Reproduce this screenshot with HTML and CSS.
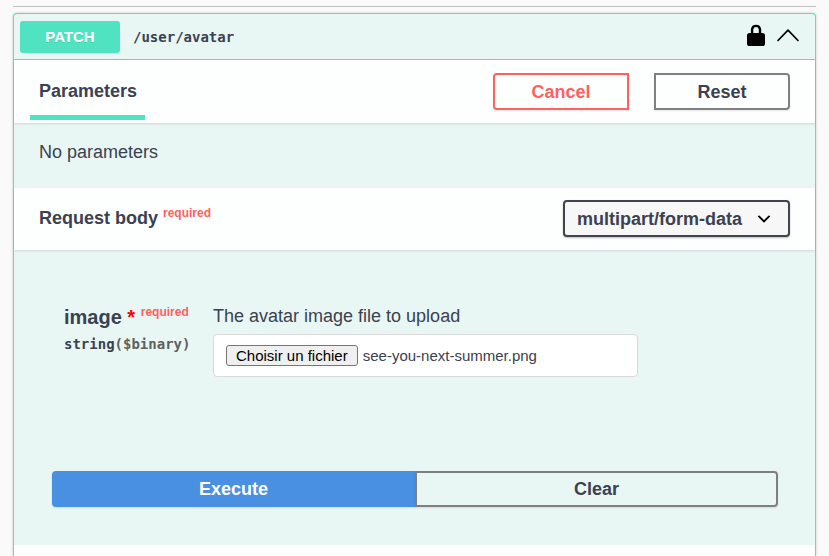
FILE: index.html
```html
<!DOCTYPE html>
<html lang="en">
<head>
<meta charset="utf-8">
<meta name="viewport" content="width=device-width, initial-scale=1">
<title>PATCH /user/avatar</title>
<link rel="stylesheet" href="styles.css">
</head>
<body>
<main class="page">
  <hr class="divider">
  <section class="operation">
    <header class="summary">
      <span class="method">PATCH</span>
      <span class="path">/user/avatar</span>
      <div class="summary-actions">
        <button class="icon-button" type="button" aria-label="Authorization">
          <svg width="20" height="24" viewBox="0 0 20 24"><path d="M6.1 11V6.2a4 4 0 0 1 7.9 0V11" fill="none" stroke="#000" stroke-width="2.4"/><rect x="1" y="10" width="18" height="13" rx="2.6"/></svg>
        </button>
        <button class="icon-button" type="button" aria-label="Collapse">
          <svg width="24" height="24" viewBox="0 0 24 24"><path d="M2 17.5 12 7.2 22 17.5" fill="none" stroke="#000" stroke-width="1.7" stroke-linecap="round" stroke-linejoin="round"/></svg>
        </button>
      </div>
    </header>

    <div class="bar bar-tabs">
      <h2 class="tab">Parameters</h2>
      <div class="bar-actions">
        <button class="btn btn-cancel" type="button">Cancel</button>
        <button class="btn btn-reset" type="button">Reset</button>
      </div>
    </div>
    <p class="empty">No parameters</p>

    <div class="bar bar-body">
      <h2 class="bar-title">Request body <span class="required">required</span></h2>
      <select class="content-type" aria-label="Content type">
        <option>multipart/form-data</option>
      </select>
    </div>

    <form class="request">
      <div class="field">
        <div class="field-info">
          <div class="field-name">image <span class="star">*</span> <span class="required">required</span></div>
          <div class="field-type">string<span class="format">($binary)</span></div>
        </div>
        <div class="field-value">
          <p class="description">The avatar image file to upload</p>
          <div class="file-box">
            <input class="file-input" type="file" id="image">
            <label class="file-button" for="image">Choisir un fichier</label>
            <span class="file-name">see-you-next-summer.png</span>
          </div>
        </div>
      </div>
      <div class="execute-group">
        <button class="btn btn-execute" type="button">Execute</button>
        <button class="btn btn-clear" type="button">Clear</button>
      </div>
    </form>
    <div class="responses"></div>
  </section>
</main>
</body>
</html>
```
FILE: styles.css
```css
* {
  box-sizing: border-box;
}

body {
  margin: 0;
  background: #fafafa;
  color: #3b4151;
  font: 18px/24px "Liberation Sans", Arial, sans-serif;
}

h2,
p {
  margin: 0;
  font-size: 18px;
}

.page {
  display: flex;
  flex-direction: column;
  min-height: 100vh;
  padding: 6px 13px 0;
}

.divider {
  width: 100%;
  height: 1px;
  margin: 0 0 6px;
  border: 0;
  background: #c0c0c0;
}

.operation {
  display: flex;
  flex: 1;
  flex-direction: column;
  border: 1px solid #50e3c2;
  border-bottom: 0;
  border-radius: 4px 4px 0 0;
  background: #e8f7f4;
  box-shadow: 0 0 3px rgba(0, 0, 0, 0.19);
}

.summary {
  display: flex;
  align-items: center;
  height: 46px;
  padding: 0 15px 0 6px;
  border-bottom: 1px solid #50e3c2;
}

.method {
  width: 100px;
  border-radius: 3px;
  background: #50e3c2;
  color: #fff;
  font-size: 15px;
  font-weight: 700;
  line-height: 32px;
  text-align: center;
  text-shadow: 0 1px 0 rgba(0, 0, 0, 0.1);
}

.path {
  flex: 1;
  padding-left: 13px;
  font: 700 14px/24px "DejaVu Sans Mono", monospace;
}

.summary-actions {
  display: flex;
  gap: 10px;
  padding-bottom: 4px;
}

.icon-button {
  display: flex;
  padding: 0;
  border: 0;
  background: none;
}

.bar {
  display: flex;
  justify-content: space-between;
  background: rgba(255, 255, 255, 0.9);
  box-shadow: 0 1px 2px rgba(0, 0, 0, 0.12);
}

.bar-tabs {
  height: 63px;
  padding: 0 25px 0 16px;
}

.bar-body {
  height: 62px;
  padding: 12px 25px;
}

.tab {
  align-self: flex-end;
  margin-bottom: 3px;
  padding: 0 8px 12px 9px;
  border-bottom: 5px solid #50e3c2;
}

.bar-title {
  line-height: 36px;
}

.bar-actions {
  display: flex;
  gap: 25px;
  padding-top: 13px;
}

.btn {
  height: 36px;
  padding: 0;
  border: 2px solid #808080;
  background: transparent;
  box-shadow: 0 1px 2px rgba(0, 0, 0, 0.1);
  color: #3b4151;
  font: 700 18px/24px "Liberation Sans", Arial, sans-serif;
}

.bar-actions .btn {
  width: 136px;
  height: 37px;
}

.btn-cancel {
  border-color: #ff6060;
  border-radius: 4px 0 0 4px;
  color: #ff6060;
}

.btn-reset,
.btn-clear {
  border-radius: 0 4px 4px 0;
}

.empty {
  height: 65px;
  padding: 17px 25px;
}

.required {
  color: #ff6060;
  font-size: 12px;
  font-weight: 700;
  line-height: 12px;
  vertical-align: super;
}

.content-type {
  width: 227px;
  height: 37px;
  padding: 0 40px 0 12px;
  appearance: none;
  border: 2px solid #41444e;
  border-radius: 4px;
  background: #f7f7f7 url("data:image/svg+xml,%3Csvg xmlns='http://www.w3.org/2000/svg' width='20' height='20' viewBox='0 0 20 20'%3E%3Cpath d='M5 7.4 10 12.4 15 7.4' fill='none' stroke='%23000' stroke-width='1.9' stroke-linecap='round'/%3E%3C/svg%3E") right 14px center no-repeat;
  box-shadow: 0 1px 2px rgba(0, 0, 0, 0.25);
  color: #3b4151;
  font: 700 18px/24px "Liberation Sans", Arial, sans-serif;
}

.request {
  padding: 54px 37px 38px 38px;
}

.field {
  display: flex;
  padding-left: 12px;
}

.field-info {
  flex: 0 0 149px;
}

.field-name {
  font-size: 20px;
  font-weight: 700;
  line-height: 26px;
  white-space: nowrap;
}

.star {
  color: #f00;
}

.field-type {
  padding-top: 2px;
  font: 700 14px/24px "DejaVu Sans Mono", monospace;
}

.format {
  color: #606060;
}

.field-value {
  flex: 0 1 425px;
}

.file-box {
  display: flex;
  align-items: center;
  gap: 5px;
  height: 43px;
  margin-top: 6px;
  padding: 0 12px;
  border: 1px solid #d9d9d9;
  border-radius: 4px;
  background: #fff;
  font-size: 15px;
}

.file-input {
  position: absolute;
  width: 1px;
  height: 1px;
  opacity: 0;
}

.file-button {
  padding: 0 9px;
  border: 1px solid #767676;
  border-radius: 3px;
  background: #efefef;
  color: #000;
  line-height: 19px;
}

.execute-group {
  display: flex;
  margin-top: 94px;
}

.execute-group .btn {
  flex: 1;
}

.btn-execute {
  border-color: #4990e2;
  border-radius: 4px 0 0 4px;
  background: #4990e2;
  color: #fff;
}

.responses {
  flex: 1;
  background: rgba(255, 255, 255, 0.9);
}
```
